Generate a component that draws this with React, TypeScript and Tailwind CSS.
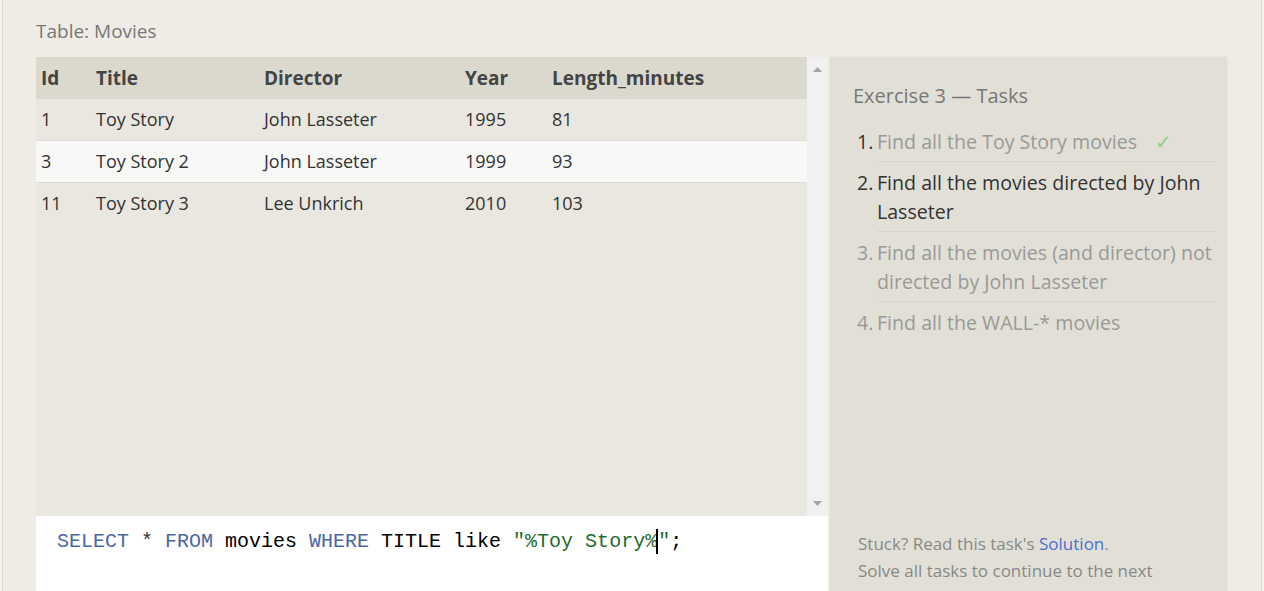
import React from 'react';

const movies = [
    { id: 1, title: 'Toy Story', director: 'John Lasseter', year: 1995, length: 81 },
    { id: 3, title: 'Toy Story 2', director: 'John Lasseter', year: 1999, length: 93 },
    { id: 11, title: 'Toy Story 3', director: 'Lee Unkrich', year: 2010, length: 103 },
];

const cols = 'grid grid-cols-[55px_168px_201px_87px_1fr] pl-[5px] items-center';

function MovieTable() {
    return (
        <div className="flex h-[459px] bg-[#e9e7e0]">
            <div className="w-[771px]">
                <div className={`${cols} h-[42px] bg-[#dbd9ce] text-[19px] font-bold text-[#444]`}>
                    <div>Id</div>
                    <div>Title</div>
                    <div>Director</div>
                    <div>Year</div>
                    <div>Length_minutes</div>
                </div>
                {movies.map((m, i) => (
                    <div
                        key={m.id}
                        className={`${cols} h-[42px] text-[18px] text-[#333] border-b ${
                            i === 1 ? 'bg-[#f8f8f7]' : ''
                        } ${i === 2 ? 'border-transparent' : 'border-[#dfddd6]'}`}
                    >
                        <div>{m.id}</div>
                        <div>{m.title}</div>
                        <div>{m.director}</div>
                        <div>{m.year}</div>
                        <div>{m.length}</div>
                    </div>
                ))}
            </div>
            {/* scrollbar */}
            <div className="w-[21px] bg-[#f1f1f1] flex flex-col justify-between items-center py-[10px]">
                <svg width="9" height="5" viewBox="0 0 9 5"><path d="M0 5 L4.5 0 L9 5 Z" fill="#a3a3a3" /></svg>
                <svg width="9" height="5" viewBox="0 0 9 5"><path d="M0 0 L4.5 5 L9 0 Z" fill="#a3a3a3" /></svg>
            </div>
        </div>
    );
}

function Editor() {
    return (
        <div className="flex-1 bg-white pl-[21px] pt-[13px]">
            <pre className="font-['Liberation_Mono',monospace] text-[20px] leading-[24px] text-black">
                <span className="text-[#4b67a6]">SELECT</span>
                <span className="text-[#333]"> * </span>
                <span className="text-[#4b67a6]">FROM</span>
                {' movies '}
                <span className="text-[#4b67a6]">WHERE</span>
                {' TITLE like '}
                <span className="text-[#1f6b2c]">"%Toy Story%</span>
                <span className="inline-block w-0 h-[25px] border-l-2 border-black align-middle -ml-px"></span>
                <span className="text-[#1f6b2c]">"</span>
                ;
            </pre>
        </div>
    );
}

const tasks = [
    { n: 1, text: 'Find all the Toy Story movies', state: 'done' },
    { n: 2, text: 'Find all the movies directed by John Lasseter', state: 'active' },
    { n: 3, text: 'Find all the movies (and director) not directed by John Lasseter', state: 'todo' },
    { n: 4, text: 'Find all the WALL-* movies', state: 'todo' },
];

function TaskPanel() {
    return (
        <div className="w-[397px] h-[600px] bg-[#e2e0d6] flex flex-col shadow-[0_0_3px_rgba(0,0,0,0.06)]">
            <h2 className="pl-[23px] pt-[25px] text-[20px] leading-[28px] text-[#777]">Exercise 3 — Tasks</h2>
            <ol className="mt-[11px] pl-[27px] pr-[11px]">
                {tasks.map((t, i) => (
                    <li key={t.n} className="flex text-[19.6px] leading-[29px]">
                        <span
                            className={`w-[20px] shrink-0 pt-[6px] ${
                                t.state === 'todo' ? 'text-[#999]' : 'text-[#333]'
                            }`}
                        >
                            {t.n}.
                        </span>
                        <span
                            className={`flex-1 pt-[6px] pb-[5px] ${
                                i < tasks.length - 1 ? 'border-b border-[#d7d4ca]' : ''
                            } ${t.state === 'active' ? 'text-[#333]' : 'text-[#999]'}`}
                        >
                            {t.text}
                            {t.state === 'done' && <span className="ml-[18px] text-[#8fcf8f]">✓</span>}
                        </span>
                    </li>
                ))}
            </ol>
            <div className="mt-auto w-[330px] pl-[28px] pb-[46px] text-[17px] leading-[27px] text-[#888]">
                <p>
                    Stuck? Read this task's <span className="text-[#4a6fcf]">Solution</span>.
                </p>
                <p>Solve all tasks to continue to the next lesson.</p>
            </div>
        </div>
    );
}

export default function App() {
    return (
        <div className="h-[591px] overflow-hidden bg-[#f3f1ec] px-[2px] font-['Open_Sans',sans-serif]">
            <div className="h-full bg-[#efece5] border-x border-[#dedbd2] pl-[33px]">
                <div className="pt-[18px] text-[19px] leading-[26px] text-[#777]">Table: Movies</div>
                <div className="mt-[13px] flex gap-[2px]">
                    <div className="w-[792px] h-[600px] flex flex-col">
                        <MovieTable />
                        <Editor />
                    </div>
                    <TaskPanel />
                </div>
            </div>
        </div>
    );
}
